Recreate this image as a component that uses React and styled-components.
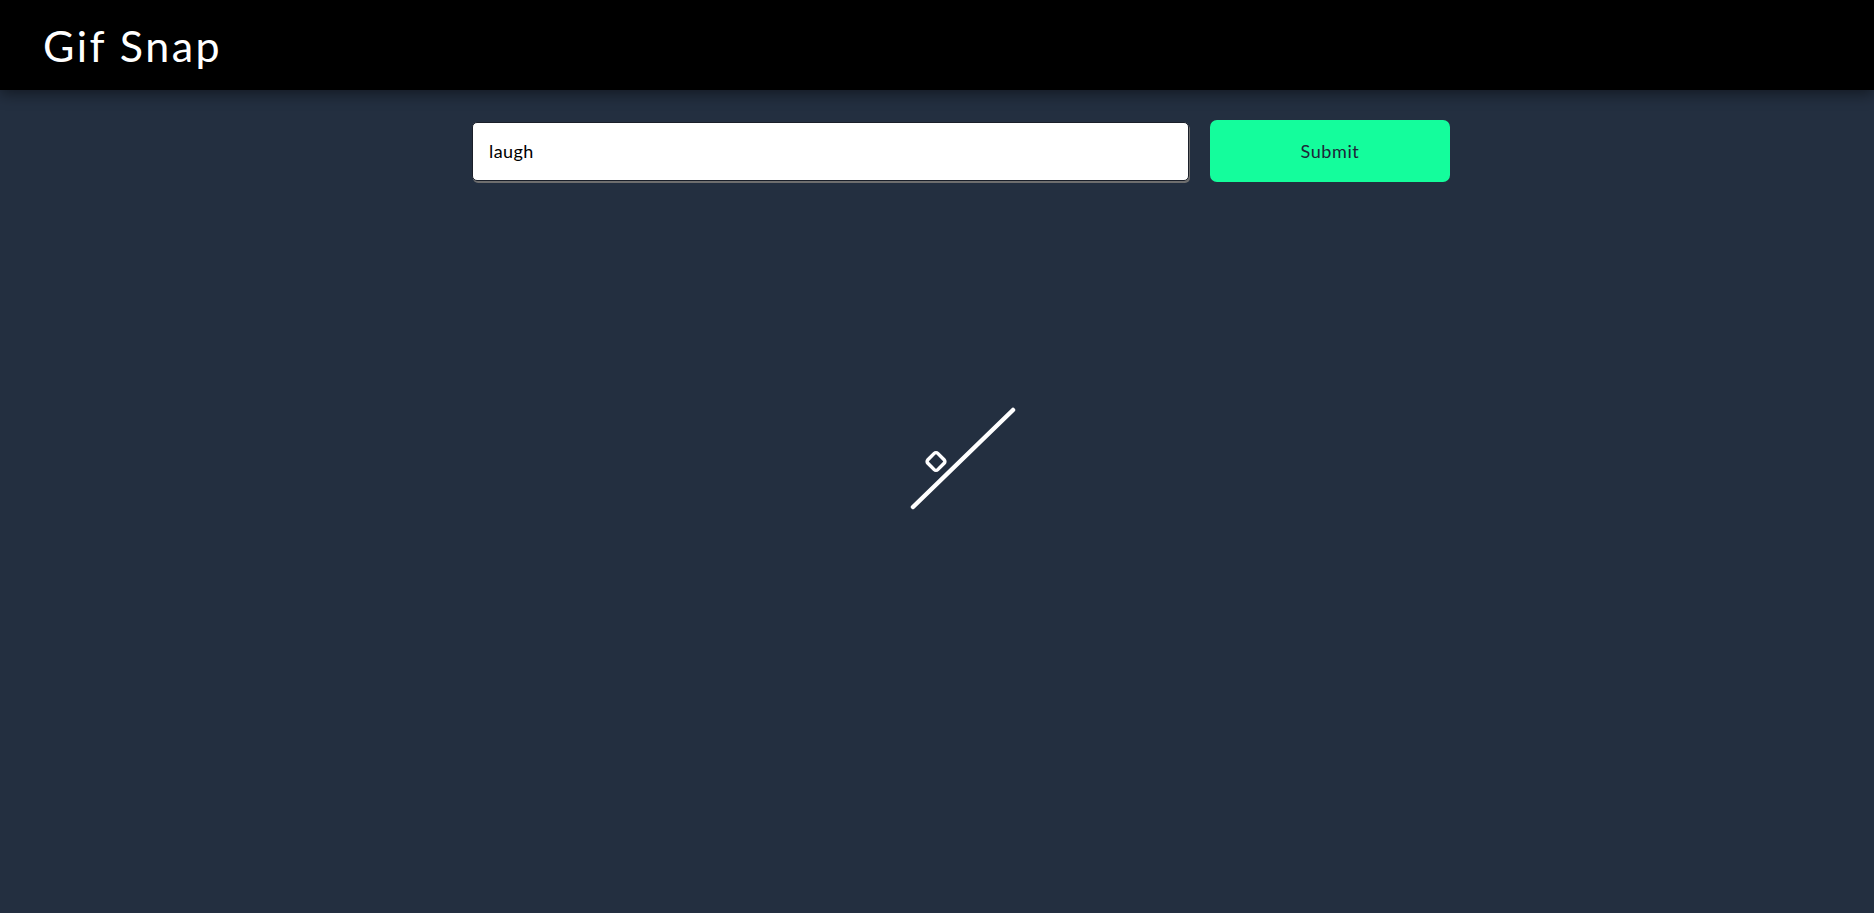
import React, { useState } from "react";
import styled, { createGlobalStyle } from "styled-components";

const GlobalStyle = createGlobalStyle`
    html, body {
        margin: 0;
        padding: 0;
        background-color: #232f40;
        font-family: "Lato", "Noto Sans", sans-serif;
        min-height: 100%;
    }
    * {
        box-sizing: border-box;
    }
`;

const App = () => {
    const [query, setQuery] = useState("laugh");

    const submit = (e) => {
        e.preventDefault();
    };

    return <Page>
        <GlobalStyle />
        <Header>
            <Title>Gif Snap</Title>
        </Header>
        <SearchForm onSubmit={submit}>
            <SearchInput value={query} onChange={(e) => setQuery(e.target.value)} />
            <SubmitButton type="submit">Submit</SubmitButton>
        </SearchForm>
        <LoaderArea>
            <svg width="110" height="110" viewBox="0 0 110 110">
                <line x1="7" y1="104" x2="107" y2="7" stroke="#ffffff" strokeWidth="4.5" strokeLinecap="round" />
                <rect x="23" y="51.5" width="14" height="14" rx="2.5" fill="none" stroke="#ffffff" strokeWidth="3.5"
                    transform="rotate(45 30 58.5)" />
            </svg>
        </LoaderArea>
    </Page>;
}

const Page = styled.div`
    min-height: 100vh;
    background-color: #232f40;
`;

const Header = styled.header`
    height: 90px;
    background-color: #000000;
    display: flex;
    align-items: center;
    padding-left: 43px;
    box-shadow: 0 4px 14px rgba(0, 0, 0, 0.45);
`;

const Title = styled.h1`
    margin: 0;
    color: #ffffff;
    font-size: 43px;
    font-weight: 400;
    letter-spacing: 2.5px;
`;

const SearchForm = styled.form`
    display: flex;
    justify-content: center;
    align-items: center;
    gap: 21px;
    padding: 30px 0 0 48px;
`;

const SearchInput = styled.input`
    width: 717px;
    height: 59px;
    padding: 0 16px;
    border: 1px solid #1a1f29;
    border-radius: 5px;
    box-shadow: 1px 2px 0 #6e6e6e;
    background: #ffffff;
    font-family: inherit;
    font-size: 18px;
    letter-spacing: 0.4px;
    color: #000000;
    outline: none;
`;

const SubmitButton = styled.button`
    width: 240px;
    height: 62px;
    border: none;
    border-radius: 7px;
    background-color: #14fd9c;
    color: #1e2538;
    font-family: inherit;
    font-size: 18px;
    letter-spacing: 0.6px;
    cursor: pointer;
`;

const LoaderArea = styled.div`
    display: flex;
    justify-content: center;
    padding: 221px 0 0 48px;
`;

export default App;
